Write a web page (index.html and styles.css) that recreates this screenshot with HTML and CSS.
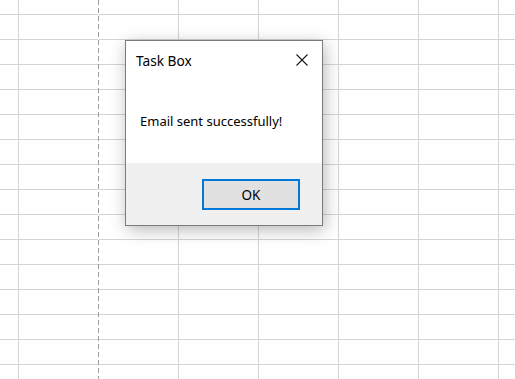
FILE: index.html
```html
<html lang="en">
<head>
  <meta charset="UTF-8" />
  <title>Task Box</title>
  <link rel="stylesheet" href="styles.css">
</head>
<body>
  <div class="sheet">
    <div class="page-break"></div>

    <div class="dialog" role="dialog" aria-labelledby="dlgTitle">
      <div class="dialog-title">
        <span id="dlgTitle">Task Box</span>
        <button type="button" class="close-btn" aria-label="Close">
          <svg width="12" height="12" viewBox="0 0 12 12">
            <path d="M0.5 0.5 L11.5 11.5 M11.5 0.5 L0.5 11.5" stroke="#1a1a1a" stroke-width="1.1" fill="none" />
          </svg>
        </button>
      </div>
      <div class="dialog-body">Email sent successfully!</div>
      <div class="dialog-footer">
        <button type="button" class="ok-btn">OK</button>
      </div>
    </div>
  </div>
</body>
</html>
```

FILE: styles.css
```css
/* Spreadsheet background */
body {
  margin: 0;
  font-family: "Noto Sans", "Open Sans", sans-serif;
  color: #000;
  background: #fff;
}
.sheet {
  position: relative;
  width: 515px;
  height: 379px;
  overflow: hidden;
  background-color: #fff;
  background-image:
    linear-gradient(to right, #d4d4d4 1px, transparent 1px),
    linear-gradient(to bottom, #d4d4d4 1px, transparent 1px);
  background-size: 80px 25px;
  background-position: 18px 14px;
}
.page-break {
  position: absolute;
  left: 98px;
  top: 0;
  width: 1px;
  height: 100%;
  background: repeating-linear-gradient(to bottom, #9a9a9a 0 5px, #fff 5px 8px);
}

/* Message box */
.dialog {
  position: absolute;
  left: 125px;
  top: 40px;
  width: 196px;
  height: 184px;
  border: 1px solid #7a7a7a;
  background: #fff;
  box-shadow: 2px 4px 16px rgba(0, 0, 0, 0.28);
  display: flex;
  flex-direction: column;
}
.dialog-title {
  height: 38px;
  display: flex;
  align-items: center;
  justify-content: space-between;
  padding: 0 14px 0 10px;
  font-size: 13.7px;
}
.close-btn {
  border: none;
  background: none;
  padding: 0;
  width: 12px;
  height: 12px;
  display: flex;
  cursor: pointer;
}
.dialog-body {
  flex: 1;
  padding: 33px 0 0 14px;
  font-size: 13px;
}
.dialog-footer {
  height: 62px;
  background: #f0f0f0;
  display: flex;
  justify-content: flex-end;
  align-items: flex-start;
  padding: 16px 22px 0 0;
  box-sizing: border-box;
}
.ok-btn {
  width: 98px;
  height: 31px;
  border: 2px solid #0078d7;
  background: #e1e1e1;
  font-family: inherit;
  font-size: 13.5px;
  color: #000;
  cursor: pointer;
}
```
